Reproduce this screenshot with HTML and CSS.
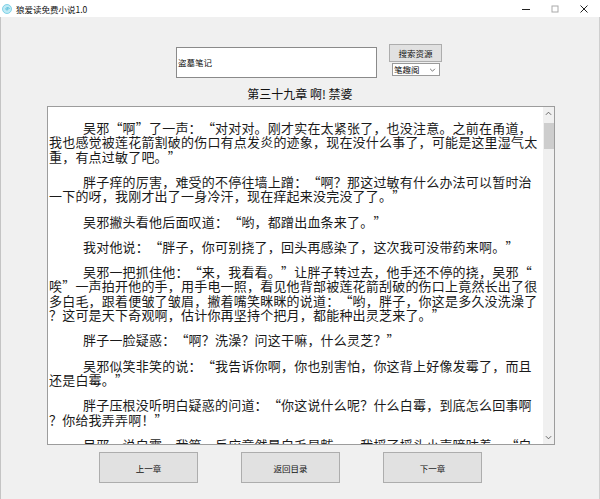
FILE: index.html
```html
<!DOCTYPE html>
<html lang="zh-CN">
<head>
<meta charset="utf-8">
<title>狼爱读免费小说1.0</title>
<link rel="stylesheet" href="styles.css">
</head>
<body>
<div class="window">
  <div class="titlebar">
    <svg class="app-icon" viewBox="0 0 10 10" width="10" height="10">
      <circle cx="5" cy="5" r="4.5" fill="#bfeaf5" stroke="#6cc9e2" stroke-width="0.8"/>
      <path d="M5 5 C5 4 6.2 4 6.2 5 C6.2 6.4 3.8 6.4 3.8 5 C3.8 3 7.4 3 7.4 5" fill="none" stroke="#4bb8d6" stroke-width="0.8"/>
    </svg>
    <span class="title">狼爱读免费小说1.0</span>
    <div class="controls">
      <svg class="ctl" viewBox="0 0 10 10" width="10" height="10"><path d="M1 5.5 H9" stroke="#222" stroke-width="1"/></svg>
      <svg class="ctl" viewBox="0 0 10 10" width="10" height="10"><rect x="2" y="2" width="6" height="6" fill="none" stroke="#aaa" stroke-width="1"/></svg>
      <svg class="ctl" viewBox="0 0 10 10" width="10" height="10"><path d="M1.5 1.5 L8.5 8.5 M8.5 1.5 L1.5 8.5" stroke="#222" stroke-width="1"/></svg>
    </div>
  </div>
  <div class="client">
    <div class="search-row">
      <div class="search-input">盗墓笔记</div>
      <div class="search-side">
        <div class="btn btn-search">搜索资源</div>
        <div class="combo">
          <span>笔趣阁</span>
          <svg viewBox="0 0 8 5" width="7" height="4"><path d="M1 1 L4 4 L7 1" fill="none" stroke="#444" stroke-width="0.9"/></svg>
        </div>
      </div>
    </div>
    <div class="chapter-title">第三十九章 啊! 禁婆</div>
    <div class="reader">
      <div class="text">
        <p class="para"><span class="ln first">吴邪<span class="qo">“</span>啊<span class="qc">”</span>了一声：<span class="qo">“</span>对对对。刚才实在太紧张了，也没注意。之前在甬道，</span><span class="ln">我也感觉被莲花箭割破的伤口有点发炎的迹象，现在没什么事了，可能是这里湿气太</span><span class="ln">重，有点过敏了吧。<span class="qc">”</span></span></p>
        <p class="para"><span class="ln first">胖子痒的厉害，难受的不停往墙上蹭：<span class="qo">“</span>啊？那这过敏有什么办法可以暂时治</span><span class="ln">一下的呀，我刚才出了一身冷汗，现在痒起来没完没了了。<span class="qc">”</span></span></p>
        <p class="para"><span class="ln first">吴邪撇头看他后面叹道：<span class="qo">“</span>哟，都蹭出血条来了。<span class="qc">”</span></span></p>
        <p class="para"><span class="ln first">我对他说：<span class="qo">“</span>胖子，你可别挠了，回头再感染了，这次我可没带药来啊。<span class="qc">”</span></span></p>
        <p class="para"><span class="ln first">吴邪一把抓住他：<span class="qo">“</span>来，我看看。<span class="qc">”</span>让胖子转过去，他手还不停的挠，吴邪<span class="qo">“</span></span><span class="ln">唉<span class="qc">”</span>一声拍开他的手，用手电一照，看见他背部被莲花箭刮破的伤口上竟然长出了很</span><span class="ln">多白毛，跟着便皱了皱眉，撇着嘴笑眯眯的说道：<span class="qo">“</span>哟，胖子，你这是多久没洗澡了</span><span class="ln">？这可是天下奇观啊，估计你再坚持个把月，都能种出灵芝来了。<span class="qc">”</span></span></p>
        <p class="para"><span class="ln first">胖子一脸疑惑：<span class="qo">“</span>啊？洗澡？问这干嘛，什么灵芝？<span class="qc">”</span></span></p>
        <p class="para"><span class="ln first">吴邪似笑非笑的说：<span class="qo">“</span>我告诉你啊，你也别害怕，你这背上好像发霉了，而且</span><span class="ln">还是白霉。<span class="qc">”</span></span></p>
        <p class="para"><span class="ln first">胖子压根没听明白疑惑的问道：<span class="qo">“</span>你这说什么呢？什么白霉，到底怎么回事啊</span><span class="ln">？你给我弄弄啊！<span class="qc">”</span></span></p>
        <p class="para"><span class="ln first">吴邪一说白霉，我第一反应竟然是白毛旱魃<span class="ell">……</span>我摇了摇头小声嘀咕着，<span class="qo">“</span>白</span></p>
      </div>
      <div class="scrollbar">
        <svg class="arrow" viewBox="0 0 8 5" width="7" height="5"><path d="M1 4 L4 1 L7 4" fill="none" stroke="#555" stroke-width="1"/></svg>
        <div class="thumb"></div>
        <div class="track"></div>
        <svg class="arrow" viewBox="0 0 8 5" width="7" height="5"><path d="M1 1 L4 4 L7 1" fill="none" stroke="#555" stroke-width="1"/></svg>
      </div>
    </div>
    <div class="nav-row">
      <div class="btn btn-nav">上一章</div>
      <div class="btn btn-nav">返回目录</div>
      <div class="btn btn-nav">下一章</div>
    </div>
  </div>
</div>
</body>
</html>
```

FILE: styles.css
```css
* { box-sizing: border-box; }
html, body { margin: 0; padding: 0; }
body {
  width: 600px;
  height: 499px;
  overflow: hidden;
  background: #f0f0f0;
  font-family: "Noto Sans CJK SC", "Noto Sans", sans-serif;
  color: #000;
}
.window {
  width: 600px;
  height: 499px;
  display: flex;
  flex-direction: column;
}
.titlebar {
  height: 17px;
  background: #fff;
  display: flex;
  align-items: center;
  padding-left: 2px;
}
.app-icon { display: block; }
.title {
  font-size: 8.5px;
  line-height: 10px;
  margin-left: 4px;
  color: #111;
}
.controls {
  margin-left: auto;
  display: flex;
  align-items: center;
  gap: 19px;
  padding-right: 11px;
}
.ctl { display: block; }
.client {
  flex: 1;
  display: flex;
  flex-direction: column;
  border-left: 1px solid #c4c4c4;
  border-right: 1px solid #cfcfcf;
}
.search-row {
  display: flex;
  align-items: flex-start;
  padding: 27px 0 0 175px;
  gap: 12px;
}
.search-input {
  margin-top: 3px;
  width: 201px;
  height: 31px;
  background: #fff;
  border: 1px solid #8a8a8a;
  font-size: 8.5px;
  line-height: 29px;
  padding-left: 1px;
  color: #111;
}
.search-side {
  display: flex;
  flex-direction: column;
  gap: 1px;
}
.btn {
  background: #e1e1e1;
  border: 1px solid #adadad;
  display: flex;
  align-items: center;
  justify-content: center;
  color: #111;
}
.btn-search {
  width: 53px;
  height: 18px;
  font-size: 8.5px;
}
.combo {
  margin-left: 3px;
  width: 48px;
  height: 13px;
  background: #fff;
  border: 1px solid #9a9a9a;
  display: flex;
  align-items: center;
  justify-content: space-between;
  padding: 0 3px 0 1px;
  font-size: 8.5px;
  line-height: 11px;
  color: #111;
}
.combo svg { display: block; }
.chapter-title {
  margin-top: 9px;
  text-align: center;
  font-size: 12px;
  line-height: 14px;
  height: 14px;
  color: #111;
}
.reader {
  margin: 5px 0 0 46px;
  width: 508px;
  height: 339px;
  background: #fff;
  border: 1px solid #9c9c9c;
  display: flex;
  overflow: hidden;
}
.text {
  flex: 1;
  overflow: hidden;
  padding: 14px 0 0 1px;
  font-size: 13px;
  letter-spacing: 0.2px;
  line-height: 14.4px;
  color: #1a1a1a;
}
.para { margin: 0 0 10.8px 0; }
.ln { display: block; white-space: nowrap; }
.ln.first { padding-left: 34px; }
.qo, .qc {
  display: inline-block;
  width: 13.2px;
  letter-spacing: 0;
}
.qo { text-align: right; }
.qc { text-align: left; }
.ell {
  display: inline-block;
  width: 26.4px;
  text-align: center;
  letter-spacing: 0;
}
.scrollbar {
  width: 11px;
  display: flex;
  flex-direction: column;
  align-items: center;
  background: #f0f0f0;
}
.arrow { display: block; margin: 4px 0; }
.thumb {
  width: 10px;
  height: 26px;
  margin-top: 3px;
  background: #cdcdcd;
}
.track { flex: 1; }
.nav-row {
  display: flex;
  gap: 43px;
  margin-top: 7px;
  padding-left: 98px;
}
.btn-nav {
  width: 99px;
  height: 31px;
  font-size: 8.5px;
}
```
